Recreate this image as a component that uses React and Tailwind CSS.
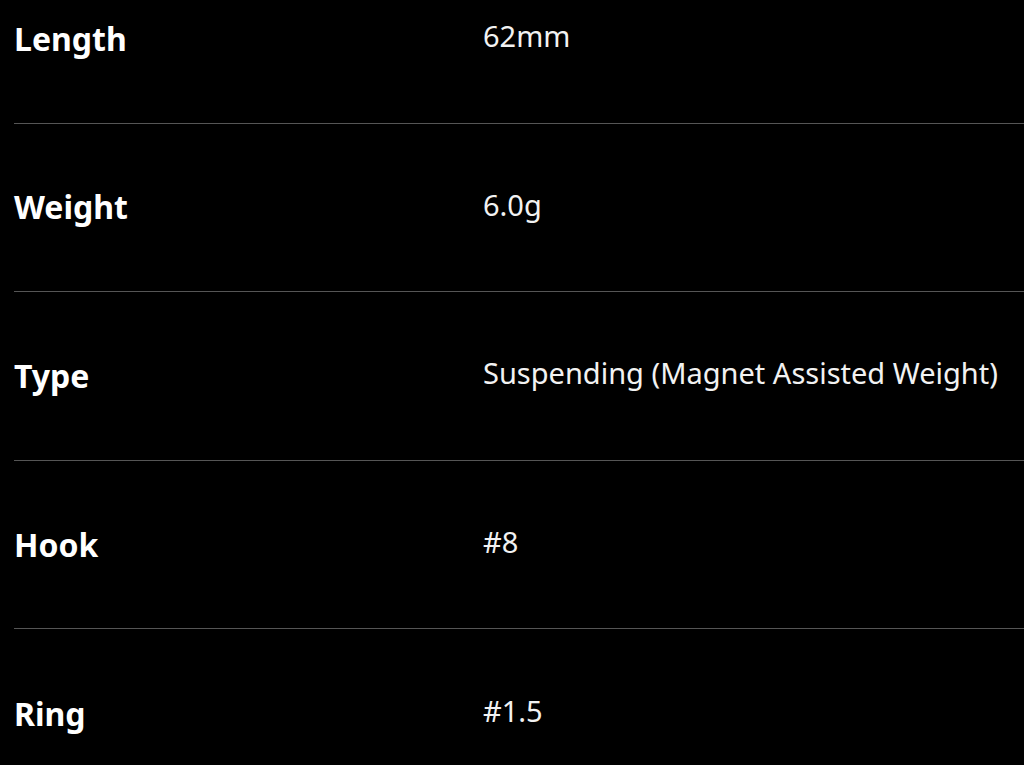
import React from 'react';

const specs = [
  { label: 'Length', value: '62mm' },
  { label: 'Weight', value: '6.0g' },
  { label: 'Type', value: 'Suspending (Magnet Assisted Weight)' },
  { label: 'Hook', value: '#8' },
  { label: 'Ring', value: '#1.5' },
];

export default function App() {
  return (
    <div className="h-[765px] w-[1024px] overflow-hidden bg-black pl-[14px] font-['Noto_Sans',sans-serif] text-white">
      <div className="-mt-[45px]">
        {specs.map((s, idx) => (
          <div
            key={idx}
            className={`flex h-[168.6px] items-center ${idx < specs.length - 1 ? 'border-b border-[#555555]' : ''}`}
          >
            <div className="w-[469px] text-[32px] font-bold leading-none">{s.label}</div>
            <div className="-mt-[6px] text-[29px] leading-none text-[#f2f2f2]">{s.value}</div>
          </div>
        ))}
      </div>
    </div>
  );
}
